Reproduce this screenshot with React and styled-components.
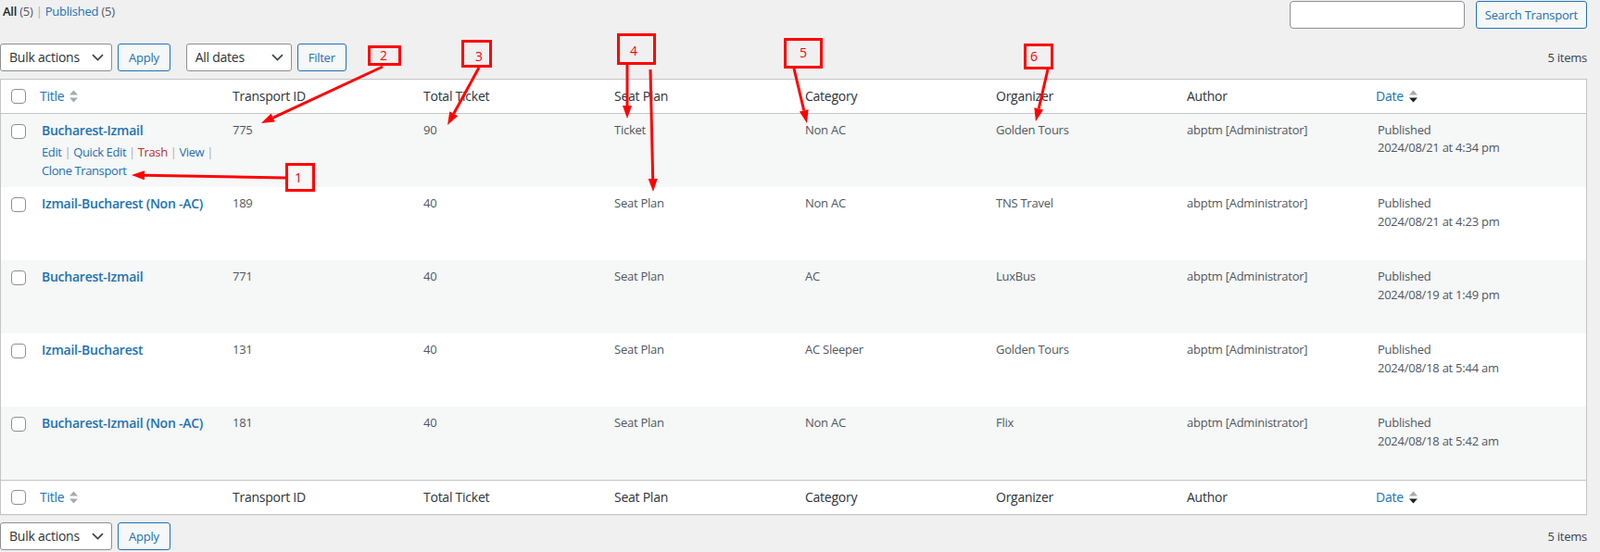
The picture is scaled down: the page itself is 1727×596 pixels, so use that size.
import React from "react";
import styled, { createGlobalStyle } from "styled-components";

const GlobalStyle = createGlobalStyle`
  * {
    box-sizing: border-box;
  }

  body {
    margin: 0;
    background: #f0f0f1;
    color: #3c434a;
    font-family: "Open Sans", "Liberation Sans", sans-serif;
    font-size: 13px;
    line-height: 1.4em;
    letter-spacing: -0.25px;
  }
`;

const transports = [
  { title: "Bucharest-Izmail", id: 775, total: 90, plan: "Ticket", category: "Non AC", organizer: "Golden Tours", date: "2024/08/21 at 4:34 pm", actions: true },
  { title: "Izmail-Bucharest (Non -AC)", id: 189, total: 40, plan: "Seat Plan", category: "Non AC", organizer: "TNS Travel", date: "2024/08/21 at 4:23 pm" },
  { title: "Bucharest-Izmail", id: 771, total: 40, plan: "Seat Plan", category: "AC", organizer: "LuxBus", date: "2024/08/19 at 1:49 pm" },
  { title: "Izmail-Bucharest", id: 131, total: 40, plan: "Seat Plan", category: "AC Sleeper", organizer: "Golden Tours", date: "2024/08/18 at 5:44 am" },
  { title: "Bucharest-Izmail (Non -AC)", id: 181, total: 40, plan: "Seat Plan", category: "Non AC", organizer: "Flix", date: "2024/08/18 at 5:42 am" },
];

const callouts = [
  { n: 1, box: [308, 176, 340, 207], label: [322, 191], arrows: [[308, 192, 142, 189]] },
  { n: 2, box: [397, 49, 433, 71], label: [414, 59], arrows: [[413, 72, 282, 133]] },
  { n: 3, box: [498, 43, 531, 73], label: [517, 60], arrows: [[517, 73, 483, 135]] },
  { n: 4, box: [666, 36, 708, 70], label: [684, 54], arrows: [[677, 70, 677, 128], [702, 75, 705, 207]] },
  { n: 5, box: [846, 41, 888, 74], label: [867, 56], arrows: [[857, 74, 871, 133]] },
  { n: 6, box: [1105, 47, 1137, 75], label: [1116, 60], arrows: [[1131, 75, 1118, 131]] },
];

const SortIcon = ({ active }) => (
  <SortSvg width="9" height="14" viewBox="0 0 9 14">
    <polygon points="0,5.5 4.5,0.5 9,5.5" fill="#a7aaad" />
    <polygon points="0,8.5 9,8.5 4.5,13.5" fill={active ? "#1d2327" : "#a7aaad"} />
  </SortSvg>
);

const Chevron = () => (
  <ChevronSvg width="13" height="8" viewBox="0 0 13 8">
    <path d="M1 1.2 L6.5 6.6 L12 1.2" fill="none" stroke="#3c434a" strokeWidth="1.7" />
  </ChevronSvg>
);

const Arrow = ({ x1, y1, x2, y2 }) => {
  const a = Math.atan2(y2 - y1, x2 - x1);
  const bx = x2 - 14 * Math.cos(a);
  const by = y2 - 14 * Math.sin(a);
  const px = -Math.sin(a) * 5;
  const py = Math.cos(a) * 5;
  return (
    <g>
      <line x1={x1} y1={y1} x2={bx} y2={by} stroke="#f00" strokeWidth="3" />
      <polygon points={`${x2},${y2} ${bx + px},${by + py} ${bx - px},${by - py}`} fill="#f00" />
    </g>
  );
};

const HeaderRow = () => (
  <tr>
    <HeadCheck $w={34}>
      <Checkbox />
    </HeadCheck>
    <HeadCell $w={206} $sortable>
      <SortLink>
        Title <SortIcon />
      </SortLink>
    </HeadCell>
    <HeadCell $w={206}>Transport ID</HeadCell>
    <HeadCell $w={206}>Total Ticket</HeadCell>
    <HeadCell $w={206}>Seat Plan</HeadCell>
    <HeadCell $w={206}>Category</HeadCell>
    <HeadCell $w={206}>Organizer</HeadCell>
    <HeadCell $w={206}>Author</HeadCell>
    <HeadCell $sortable>
      <SortLink>
        Date <SortIcon active />
      </SortLink>
    </HeadCell>
  </tr>
);

const Tablenav = ({ filters, $top }) => (
  <Nav $top={$top}>
    <Select $w={121}>
      Bulk actions
      <Chevron />
    </Select>
    <Button $pad={11}>Apply</Button>
    {filters && (
      <FilterGroup>
        <Select $w={114}>
          All dates
          <Chevron />
        </Select>
        <Button $pad={11}>Filter</Button>
      </FilterGroup>
    )}
    <Count>5 items</Count>
  </Nav>
);

const App = () => {
  return (
    <Page>
      <GlobalStyle />
      <TopBar>
        <Subsubsub>
          <Current>All</Current> <Num>(5)</Num> <Sep>|</Sep> <Link>Published</Link> <Num>(5)</Num>
        </Subsubsub>
        <SearchBox>
          <SearchInput />
          <Button $pad={9}>Search Transport</Button>
        </SearchBox>
      </TopBar>

      <Tablenav filters $top={15} />

      <Table>
        <thead>
          <HeaderRow />
        </thead>
        <tbody>
          {transports.map((t, i) => (
            <Row key={i} $striped={i % 2 === 0}>
              <BodyCheck>
                <Checkbox />
              </BodyCheck>
              <Cell>
                <RowTitle>{t.title}</RowTitle>
                {t.actions && (
                  <RowActions>
                    <ActionLine>
                      <Link>Edit</Link> <Sep>|</Sep> <Link>Quick Edit</Link> <Sep>|</Sep>{" "}
                      <Trash>Trash</Trash> <Sep>|</Sep> <Link>View</Link> <Sep>|</Sep>
                    </ActionLine>
                    <ActionLine>
                      <Link>Clone Transport</Link>
                    </ActionLine>
                  </RowActions>
                )}
              </Cell>
              <Cell>{t.id}</Cell>
              <Cell>{t.total}</Cell>
              <Cell>{t.plan}</Cell>
              <Cell>{t.category}</Cell>
              <Cell>{t.organizer}</Cell>
              <Cell>abptm [Administrator]</Cell>
              <Cell>
                Published
                <br />
                {t.date}
              </Cell>
            </Row>
          ))}
        </tbody>
        <tfoot>
          <HeaderRow />
        </tfoot>
      </Table>

      <Tablenav $top={8} />

      <Overlay width="1727" height="596" viewBox="0 0 1727 596">
        {callouts.map((c) => (
          <g key={c.n}>
            <rect
              x={c.box[0] + 1.5}
              y={c.box[1] + 1.5}
              width={c.box[2] - c.box[0] - 3}
              height={c.box[3] - c.box[1] - 3}
              fill="none"
              stroke="#f00"
              strokeWidth="3"
            />
            <CalloutText x={c.label[0]} y={c.label[1]}>
              {c.n}
            </CalloutText>
            {c.arrows.map((a, j) => (
              <Arrow key={j} x1={a[0]} y1={a[1]} x2={a[2]} y2={a[3]} />
            ))}
          </g>
        ))}
      </Overlay>
    </Page>
  );
};

const Page = styled.div`
  position: relative;
  width: 1727px;
  height: 596px;
  padding-right: 14px;
  overflow: hidden;
`;

const TopBar = styled.div`
  display: flex;
  justify-content: space-between;
  align-items: flex-start;
  height: 32px;
  padding-top: 1px;
`;

const Subsubsub = styled.div`
  padding: 2px 0 0 3px;
  font-size: 13px;
  line-height: 19px;
`;

const Current = styled.span`
  color: #1d2327;
  font-weight: 600;
`;

const Num = styled.span`
  color: #50575e;
`;

const Sep = styled.span`
  color: #a7aaad;
`;

const Link = styled.span`
  color: #2271b1;
`;

const Trash = styled.span`
  color: #b32d2e;
`;

const SearchBox = styled.div`
  display: flex;
  gap: 12px;
`;

const SearchInput = styled.div`
  width: 189px;
  height: 30px;
  background: #fff;
  border: 1px solid #8c8f94;
  border-radius: 4px;
`;

const Button = styled.div`
  display: flex;
  align-items: center;
  height: 30px;
  padding: 0 ${(p) => p.$pad}px;
  background: #f6f7f7;
  border: 1px solid #2271b1;
  border-radius: 3px;
  color: #2271b1;
  font-size: 13px;
  white-space: nowrap;
`;

const Nav = styled.div`
  display: flex;
  align-items: center;
  gap: 6px;
  height: 30px;
  margin-top: ${(p) => p.$top}px;
`;

const FilterGroup = styled.div`
  display: flex;
  align-items: center;
  gap: 6px;
  margin-left: 11px;
`;

const Select = styled.div`
  display: flex;
  align-items: center;
  justify-content: space-between;
  width: ${(p) => p.$w}px;
  height: 30px;
  padding: 0 8px 0 9px;
  background: #fff;
  border: 1px solid #8c8f94;
  border-radius: 3px;
  color: #2c3338;
  font-size: 14px;
`;

const ChevronSvg = styled.svg`
  display: block;
  flex: none;
`;

const Count = styled.div`
  margin-left: auto;
  color: #3c434a;
  font-size: 13px;
`;

const Table = styled.table`
  width: 100%;
  margin-top: 8px;
  table-layout: fixed;
  border-collapse: separate;
  border-spacing: 0;
  background: #fff;
  border: 1px solid #c3c4c7;
  box-shadow: 0 1px 1px rgba(0, 0, 0, 0.04);

  thead th {
    border-bottom: 1px solid #c3c4c7;
  }

  tfoot th {
    border-top: 1px solid #c3c4c7;
  }
`;

const HeadCell = styled.th`
  width: ${(p) => (p.$w ? `${p.$w}px` : "auto")};
  height: 36px;
  padding: ${(p) => (p.$sortable ? "8px 8px" : "8px 10px")};
  color: #2c3338;
  font-size: 14px;
  font-weight: 400;
  line-height: 19.6px;
  text-align: left;
  vertical-align: middle;
`;

const HeadCheck = styled.th`
  width: ${(p) => p.$w}px;
  padding: 0 0 0 11px;
  vertical-align: middle;
`;

const SortLink = styled.span`
  display: inline-flex;
  align-items: center;
  gap: 6px;
  color: #2271b1;
`;

const SortSvg = styled.svg`
  display: block;
`;

const Checkbox = styled.div`
  width: 16px;
  height: 16px;
  background: #fff;
  border: 1px solid #8c8f94;
  border-radius: 4px;
`;

const Row = styled.tr`
  height: 79px;
  background: ${(p) => (p.$striped ? "#f6f7f7" : "#fff")};
`;

const BodyCheck = styled.td`
  padding: 11px 0 0 11px;
  vertical-align: top;
`;

const Cell = styled.td`
  padding: 8px 10px;
  color: #50575e;
  font-size: 13px;
  line-height: 19.5px;
  vertical-align: top;
`;

const RowTitle = styled.strong`
  display: block;
  margin-bottom: 3px;
  color: #2271b1;
  font-size: 14px;
  font-weight: 600;
`;

const RowActions = styled.div`
  padding-top: 2px;
  font-size: 13px;
  letter-spacing: -0.4px;
`;

const ActionLine = styled.div`
  white-space: nowrap;
`;

const Overlay = styled.svg`
  position: absolute;
  top: 0;
  left: 0;
  pointer-events: none;
`;

const CalloutText = styled.text`
  fill: #f00;
  font-family: "Open Sans", "Liberation Sans", sans-serif;
  font-size: 14px;
  text-anchor: middle;
  dominant-baseline: central;
`;

export default App;
